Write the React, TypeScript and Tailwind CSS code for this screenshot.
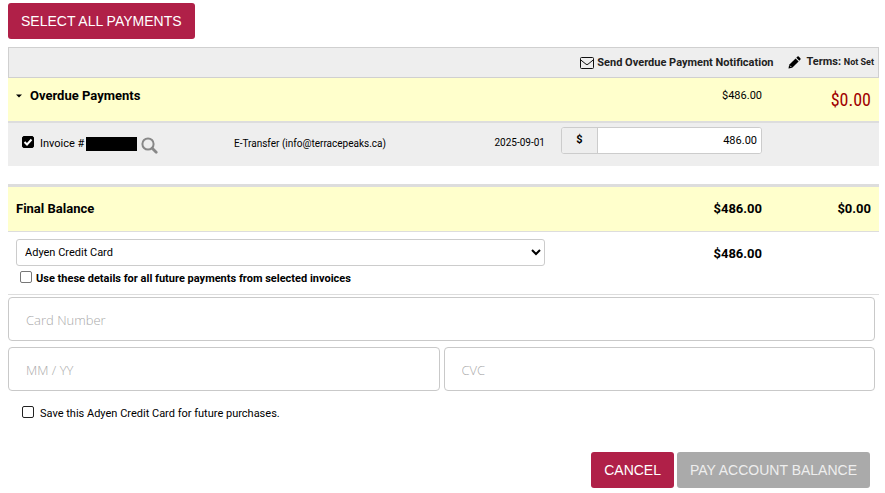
import { useState } from "react";

const cardInput =
  "block h-11 w-full min-w-0 rounded border border-[#c9c9c9] bg-white px-[17px] pt-0.5 font-['Open_Sans',sans-serif] text-[13px] font-light text-black outline-none placeholder:text-[#aaa]";

const boxClass =
  "size-3 shrink-0 appearance-none rounded-xs border bg-white bg-center bg-no-repeat";

function Tick() {
  return (
    <svg viewBox="0 0 12 12" className="pointer-events-none absolute top-0 left-0 size-3" fill="none" stroke="#fff" strokeWidth="2" aria-hidden="true">
      <path d="M2.5 6 L5 8.5 L9.5 3.5" />
    </svg>
  );
}

function Envelope() {
  return (
    <svg viewBox="0 0 14 12" className="h-3 w-3.5" fill="none" stroke="#111" strokeWidth="1" aria-hidden="true">
      <rect x="0.5" y="0.5" width="13" height="11" rx="1" />
      <path d="M0.8 3 L6 7.2 Q7 8 8 7.2 L13.2 3" />
    </svg>
  );
}

function Pencil() {
  return (
    <svg viewBox="0 0 13 13" className="size-[13px]" fill="#000" aria-hidden="true">
      <path d="M0.5 12.5 L1.2 8.8 L7.6 2.5 L10.6 5.5 L4.2 11.8 Z" />
      <path d="M8.3 1.8 L9.5 0.6 Q10.1 0.1 10.7 0.6 L12.4 2.3 Q12.9 2.9 12.4 3.5 L11.3 4.7 Z" />
      <path d="M1.9 9.6 L3.4 11.1" stroke="#eee" strokeWidth="0.8" />
    </svg>
  );
}

function Magnifier() {
  return (
    <svg viewBox="0 0 17 17" className="size-[17px]" fill="none" stroke="#888" aria-hidden="true">
      <circle cx="7" cy="7" r="5.6" strokeWidth="2" />
      <path d="M11.2 11.2 L15.2 15.2" strokeWidth="2.8" strokeLinecap="round" />
    </svg>
  );
}

export default function App() {
  const [selected, setSelected] = useState(true);
  const [amount, setAmount] = useState("486.00");

  return (
    <main className="bg-white pt-[3px] pr-1.5 pb-1 pl-2 font-[Roboto,sans-serif] text-[11px] text-black">
      <button type="button" className="block h-9 rounded-[3px] bg-[#b02048] px-[13px] font-['Liberation_Sans',Arial,sans-serif] text-[14px] text-white" onClick={() => setSelected(true)}>
        SELECT ALL PAYMENTS
      </button>

      <div className="mt-2 flex h-[31px] items-center justify-end border border-[#d0d0d0] bg-[#eee] pr-1 text-[11px] font-bold text-[#222]">
        <button type="button" className="flex items-center gap-[3px]">
          <Envelope />
          <span className="pt-0.5">Send Overdue Payment Notification</span>
        </button>
        <button type="button" className="ml-3.5 flex items-center gap-1.5">
          <Pencil />
          <span>
            Terms: <span className="text-[9px]">Not Set</span>
          </span>
        </button>
      </div>

      <table className="w-full table-fixed border-collapse">
        <colgroup>
          <col className="w-[218px]" />
          <col />
          <col className="w-[90px]" />
          <col className="w-[217px]" />
          <col className="w-[109px]" />
        </colgroup>
        <tbody>
          <tr className="h-11 border-b-2 border-[#ddd] bg-[#ffffcc]">
            <th colSpan={3} scope="row" className="px-2 pb-2 text-left text-[13px] font-bold">
              <button type="button" className="flex items-center gap-2">
                <svg viewBox="0 0 6 4" className="h-1 w-1.5" aria-hidden="true">
                  <path d="M0 0.5 H6 L3 3.5 Z" />
                </svg>
                Overdue Payments
              </button>
            </th>
            <td className="px-2 pb-1.5 text-right">$486.00</td>
            <td className="px-2 text-right font-['Liberation_Sans_Narrow','Roboto_Condensed',sans-serif] text-[18px] text-[#a00000]">$0.00</td>
          </tr>
          <tr className="h-11 bg-[#eee]">
            <td className="pb-0.5 pl-3.5">
              <div className="flex items-center">
                <label className="flex items-center gap-1.5">
                  <span className="relative flex pb-1">
                    <input
                      type="checkbox"
                      checked={selected}
                      onChange={(e) => setSelected(e.target.checked)}
                      className={`${boxClass} border-black checked:bg-black`}
                    />
                    {selected && <Tick />}
                  </span>
                  <span className="pt-0.5">Invoice #</span>
                </label>
                <span className="ml-0.5 h-3.5 w-[51px] bg-black" />
                <button type="button" aria-label="View invoice" className="ml-1 pt-1">
                  <Magnifier />
                </button>
              </div>
            </td>
            <td className="pb-0.5 pl-2 text-[10px]">E-Transfer (info@terracepeaks.ca)</td>
            <td className="pr-2 pb-1 text-right text-[10px]">2025-09-01</td>
            <td className="px-2 pb-2">
              <div className="flex h-[27px] overflow-hidden rounded-[3px] border border-[#ccc] bg-white">
                <span className="flex w-9 items-center justify-center border-r border-[#ccc] bg-[#eee] text-[11px] font-bold">$</span>
                <input
                  aria-label="Payment amount"
                  value={amount}
                  onChange={(e) => setAmount(e.target.value)}
                  className="min-w-0 flex-1 bg-white px-1 pt-0.5 text-right text-[11px] outline-none"
                />
              </div>
            </td>
            <td />
          </tr>
        </tbody>
      </table>

      <table className="mt-[18px] w-full table-fixed border-collapse text-[13px] font-bold">
        <colgroup>
          <col />
          <col className="w-[217px]" />
          <col className="w-[109px]" />
        </colgroup>
        <tbody>
          <tr className="h-[46px] border-t-3 border-b border-t-[#ddd] border-b-[#ddd] bg-[#ffffcc]">
            <th scope="row" className="px-2 text-left">Final Balance</th>
            <td className="px-2 text-right">$486.00</td>
            <td className="px-2 text-right">$0.00</td>
          </tr>
          <tr className="border-b border-[#ddd] align-top">
            <td className="px-2 pt-[7px] pb-1.5">
              <select aria-label="Payment method" className="block h-[27px] w-full rounded-[3px] border border-[#ccc] bg-white pl-1 text-[11px] font-normal">
                <option>Adyen Credit Card</option>
              </select>
              <label className="mt-[5px] ml-1 flex items-center gap-1 text-[11px]">
                <input type="checkbox" className={`${boxClass} mb-1 border-[#777] checked:bg-[#0075ff]`} />
                Use these details for all future payments from selected invoices
              </label>
            </td>
            <td className="px-2 pt-3 text-right">$486.00</td>
            <td />
          </tr>
        </tbody>
      </table>

      <div className="mt-0.5 grid grid-cols-2 gap-x-1 gap-y-1.5 pr-1">
        <div className="col-span-2">
          <input aria-label="Card Number" placeholder="Card Number" className={cardInput} />
        </div>
        <input aria-label="Expiry date" placeholder="MM / YY" className={cardInput} />
        <input aria-label="CVC" placeholder="CVC" className={cardInput} />
      </div>

      <label className="mt-[15px] ml-3.5 flex items-center gap-1.5">
        <input type="checkbox" className={`${boxClass} mb-1 border-[#222] checked:bg-black`} />
        Save this Adyen Credit Card for future purchases.
      </label>

      <div className="mt-[30px] flex justify-end gap-[3px] pr-[9px] font-['Liberation_Sans',Arial,sans-serif] text-[14px]">
        <button type="button" className="h-9 rounded-[3px] bg-[#b02048] px-[13px] text-white">CANCEL</button>
        <button type="button" disabled className="h-9 rounded-[3px] bg-[#aaa] px-[13px] text-[#eee]">PAY ACCOUNT BALANCE</button>
      </div>
    </main>
  );
}
